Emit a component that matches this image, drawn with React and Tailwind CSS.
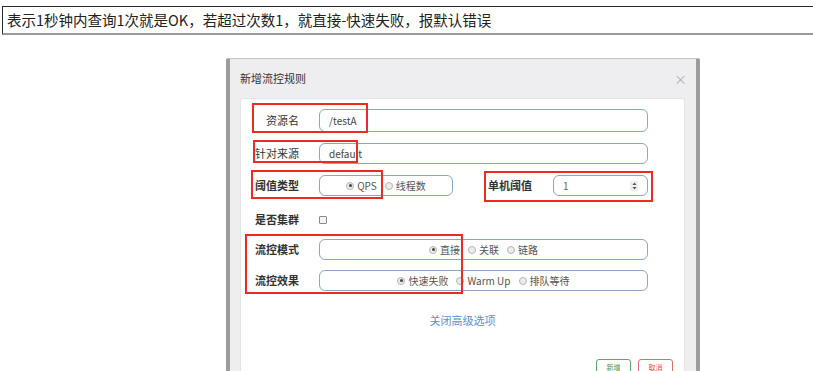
import React from "react";

const font = { fontFamily: '"Noto Sans CJK SC", "Liberation Sans", sans-serif' };

const Radio = ({ label, checked }) => (
  <span className="flex items-center gap-[3px]">
    <span className="w-[8px] h-[8px] rounded-full border border-[#b5b5b5] bg-[#ececec] flex items-center justify-center">
      {checked && <span className="w-[3px] h-[3px] rounded-full bg-[#444]" />}
    </span>
    <span className="text-[10px] text-[#555] leading-none">{label}</span>
  </span>
);

const Label = ({ children, bold }) => (
  <div className={`w-[58px] shrink-0 text-right text-[11px] text-[#333] leading-none ${bold ? "font-bold" : ""}`}>
    {children}
  </div>
);

const Field = ({ className = "", children }) => (
  <div className={`border border-[#8aa6c9] rounded-[6px] bg-white flex items-center ${className}`}>{children}</div>
);

const RedBox = ({ className }) => (
  <div className={`absolute border-2 border-[#ef2a1f] pointer-events-none ${className}`} />
);

export default function App() {
  return (
    <div className="relative h-[371px] w-[813px] overflow-hidden bg-white" style={font}>
      {/* note bar */}
      <div className="mt-[6px] ml-[2px] h-[29px] border-t border-l border-[#2a2a2a] border-b-2 border-b-[#9a9a9a] flex items-center pl-[4px]">
        <span className="text-[14.5px] text-[#222] leading-none">表示1秒钟内查询1次就是OK，若超过次数1，就直接-快速失败，报默认错误</span>
      </div>

      {/* modal */}
      <div className="ml-[226px] mt-[23px] w-[474px] h-[400px] bg-[#eeedf0] border-l-4 border-r-4 border-[#9c9c9c] border-t border-t-[#c4c4c4] rounded-t-[2px]">
        <div className="h-[39px] flex items-center justify-between pl-[10px] pr-[9px]">
          <span className="text-[11px] text-[#333]">新增流控规则</span>
          <span className="text-[13px] text-[#b0b0b0] leading-none">×</span>
        </div>

        <div className="ml-[10px] w-[445px] h-[320px] bg-white border border-[#e4e4e4] rounded-t-[3px] flex flex-col">
          {/* 资源名 */}
          <div className="mt-[10px] flex items-center h-[23px]">
            <Label>资源名</Label>
            <Field className="ml-[20px] w-[329px] h-full pl-[9px]">
              <span className="text-[10px] text-[#444]">/testA</span>
            </Field>
          </div>

          {/* 针对来源 */}
          <div className="mt-[11px] flex items-center h-[21px]">
            <Label>针对来源</Label>
            <Field className="ml-[20px] w-[329px] h-full pl-[9px] bg-[#fffff6]">
              <span className="text-[10px] text-[#444]">default</span>
            </Field>
          </div>

          {/* 阈值类型 / 单机阈值 */}
          <div className="mt-[11px] flex items-center h-[21px]">
            <Label bold>阈值类型</Label>
            <Field className="ml-[20px] w-[134px] h-full justify-center gap-[8px]">
              <Radio label="QPS" checked />
              <Radio label="线程数" />
            </Field>
            <div className="ml-[35px] text-[11px] font-bold text-[#333] leading-none">单机阈值</div>
            <Field className="ml-[21px] w-[95px] h-full pl-[9px] pr-[9px] justify-between">
              <span className="text-[10px] text-[#666]">1</span>
              <span className="w-[8px] h-[10px] bg-[#eeeeee] flex items-center justify-center">
                <svg width="5" height="8" viewBox="0 0 5 8">
                  <path d="M2.5 0.5 L4.5 3 L0.5 3 Z" fill="#555" />
                  <path d="M0.5 5 L4.5 5 L2.5 7.5 Z" fill="#555" />
                </svg>
              </span>
            </Field>
          </div>

          {/* 是否集群 */}
          <div className="mt-[13px] flex items-center h-[21px]">
            <Label bold>是否集群</Label>
            <span className="ml-[20px] w-[8px] h-[8px] border border-[#8a8a8a] rounded-[1px] bg-[#f4f4f4]" />
          </div>

          {/* 流控模式 */}
          <div className="mt-[9px] flex items-center h-[21px]">
            <Label bold>流控模式</Label>
            <Field className="ml-[20px] w-[329px] h-full justify-center gap-[8px]">
              <Radio label="直接" checked />
              <Radio label="关联" />
              <Radio label="链路" />
            </Field>
          </div>

          {/* 流控效果 */}
          <div className="mt-[10px] flex items-center h-[21px]">
            <Label bold>流控效果</Label>
            <Field className="ml-[20px] w-[329px] h-full justify-center gap-[8px]">
              <Radio label="快速失败" checked />
              <Radio label="Warm Up" />
              <Radio label="排队等待" />
            </Field>
          </div>

          <div className="mt-[21px] flex justify-center">
            <span className="text-[11px] text-[#5b8fd3] leading-[16px]">关闭高级选项</span>
          </div>

          <div className="mt-[31px] flex justify-end gap-[7px] pr-[11px]">
            <span className="w-[35px] h-[17px] border border-[#5aa86a] rounded-[3px] flex items-center justify-center text-[7px] leading-none text-[#4a9a5c]">新增</span>
            <span className="w-[35px] h-[17px] border border-[#d9706c] rounded-[3px] flex items-center justify-center text-[7px] leading-none text-[#d9534f]">取消</span>
          </div>
        </div>
      </div>

      {/* highlight boxes */}
      <RedBox className="left-[252px] top-[103px] w-[116px] h-[30px]" />
      <RedBox className="left-[253px] top-[140px] w-[105px] h-[23px]" />
      <RedBox className="left-[251px] top-[170px] w-[132px] h-[29px]" />
      <RedBox className="left-[484px] top-[171px] w-[169px] h-[31px]" />
      <RedBox className="left-[245px] top-[234px] w-[218px] h-[60px]" />
    </div>
  );
}
